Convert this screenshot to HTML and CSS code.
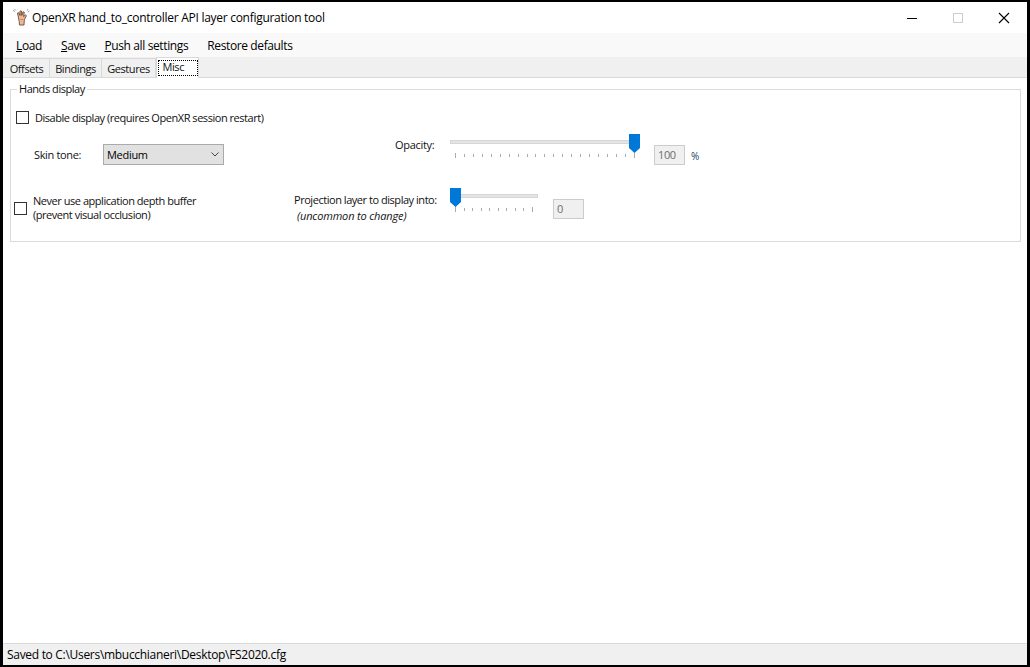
FILE: index.html
```html
<!DOCTYPE html>
<html lang="en">
<head>
<meta charset="utf-8">
<title>OpenXR hand_to_controller API layer configuration tool</title>
<link rel="stylesheet" href="styles.css">
</head>
<body>
<div class="window">
  <header class="titlebar">
    <svg class="app-icon" width="18" height="18" viewBox="0 0 18 18">
      <path d="M6.5 10 L5.5 5 L6.8 4.6 L8 7.5 L8 3 L9.5 3 L9.8 7.5 L11 3.8 L12.3 4.2 L11.6 8.5 L13.6 6.8 L14.4 7.8 L12.4 11.5 L12.2 14 L12 17 L7.5 17 L7.2 13.5 Z" fill="#ecb994" stroke="#5a3a28" stroke-width="0.8"/>
      <path d="M1 2.5 L3 3.5 M2.5 1 L3.8 2.4 M16 1 L15 2.8 M17.5 3 L15.8 4" stroke="#a0a0a0" stroke-width="1" fill="none"/>
      <path d="M8.5 11.5 L11 11.5" stroke="#b07a58" stroke-width="0.8"/>
    </svg>
    <span class="title">OpenXR hand_to_controller API layer configuration tool</span>
    <div class="caption">
      <svg class="cap-btn" width="12" height="12" viewBox="0 0 12 12"><path d="M1 6.5 H11" stroke="#000" stroke-width="1"/></svg>
      <svg class="cap-btn" width="12" height="12" viewBox="0 0 12 12"><rect x="1.5" y="1.5" width="9" height="9" fill="none" stroke="#cccccc" stroke-width="1"/></svg>
      <svg class="cap-btn" width="12" height="12" viewBox="0 0 12 12"><path d="M1 1 L11 11 M11 1 L1 11" stroke="#000" stroke-width="1.1"/></svg>
    </div>
  </header>
  <nav class="menubar">
    <span class="menu-item"><u>L</u>oad</span>
    <span class="menu-item"><u>S</u>ave</span>
    <span class="menu-item"><u>P</u>ush all settings</span>
    <span class="menu-item">Restore defaults</span>
  </nav>
  <div class="tabstrip">
    <span class="tab tab-offsets">Offsets</span>
    <span class="tab tab-bindings">Bindings</span>
    <span class="tab tab-gestures">Gestures</span>
    <span class="tab tab-active"><span class="focus-rect">Misc</span></span>
  </div>
  <main class="content">
    <fieldset class="group">
      <legend class="group-title">Hands display</legend>
      <div class="row-disable">
        <span class="checkbox"></span>
        <span class="label label-disable">Disable display (requires OpenXR session restart)</span>
      </div>
      <div class="row-skin">
        <span class="label label-skin">Skin tone:</span>
        <div class="select">
          <span class="select-value">Medium</span>
          <svg width="8" height="5" viewBox="0 0 8 5"><path d="M0.5 0.5 L4 4 L7.5 0.5" fill="none" stroke="#444" stroke-width="1"/></svg>
        </div>
        <span class="label label-opacity">Opacity:</span>
        <div class="slider slider-long">
          <div class="track"></div>
          <svg class="thumb thumb-end" width="11" height="19" viewBox="0 0 11 19"><path d="M0 0 H11 V14 L5.5 19 L0 14 Z" fill="#0078d7"/></svg>
          <div class="ticks">
            <i class="tick"></i><i class="tick"></i><i class="tick"></i><i class="tick"></i><i class="tick"></i><i class="tick"></i><i class="tick"></i>
            <i class="tick"></i><i class="tick"></i><i class="tick"></i><i class="tick"></i><i class="tick"></i><i class="tick"></i><i class="tick"></i>
            <i class="tick"></i><i class="tick"></i><i class="tick"></i><i class="tick"></i><i class="tick"></i><i class="tick"></i><i class="tick"></i>
          </div>
        </div>
        <div class="edit edit-opacity">100</div>
        <span class="unit">%</span>
      </div>
      <div class="row-depth">
        <span class="checkbox checkbox-depth"></span>
        <span class="label label-depth">Never use application depth buffer<br>(prevent visual occlusion)</span>
        <div class="label label-projection">
          <span>Projection layer to display into:</span>
          <em class="hint">(uncommon to change)</em>
        </div>
        <div class="slider slider-short">
          <div class="track"></div>
          <svg class="thumb" width="11" height="19" viewBox="0 0 11 19"><path d="M0 0 H11 V14 L5.5 19 L0 14 Z" fill="#0078d7"/></svg>
          <div class="ticks">
            <i class="tick"></i><i class="tick"></i><i class="tick"></i><i class="tick"></i><i class="tick"></i>
            <i class="tick"></i><i class="tick"></i><i class="tick"></i><i class="tick"></i><i class="tick"></i>
          </div>
        </div>
        <div class="edit edit-layer">0</div>
      </div>
    </fieldset>
  </main>
  <footer class="statusbar">Saved to C:\Users\mbucchianeri\Desktop\FS2020.cfg</footer>
</div>
</body>
</html>
```
FILE: styles.css
```css
* { box-sizing: border-box; }
html, body { margin: 0; height: 100%; }
body {
  background: #000;
  font-family: "Open Sans", "Liberation Sans", sans-serif;
  color: #000;
}
.window {
  width: 1030px;
  height: 667px;
  border-style: solid;
  border-color: #000;
  border-width: 2px 3px 2px 3px;
  background: #fff;
  display: flex;
  flex-direction: column;
  overflow: hidden;
}
.titlebar {
  height: 31px;
  flex: none;
  display: flex;
  align-items: center;
  padding-left: 9px;
  background: #fff;
}
.app-icon { margin-right: 2px; margin-top: -1px; }
.title { font-size: 12px; letter-spacing: -0.28px; white-space: nowrap; }
.caption { margin-left: auto; display: flex; }
.cap-btn { margin-left: 34px; margin-right: 0; }
.caption .cap-btn:last-child { margin-right: 17px; }
.menubar {
  height: 24px;
  flex: none;
  background: #f9f9f9;
  display: flex;
  align-items: center;
  padding-left: 13px;
  gap: 19px;
  font-size: 12px;
  letter-spacing: -0.38px;
}
.menu-item { white-space: nowrap; }
.tabstrip {
  height: 21px;
  flex: none;
  background: #f0f0f0;
  display: flex;
  align-items: flex-end;
  padding-left: 1px;
  border-bottom: 1px solid #d9d9d9;
  font-size: 11px;
}
.tab {
  height: 19px;
  display: flex;
  align-items: center;
  justify-content: center;
  border: 1px solid #d9d9d9;
  border-bottom: 0;
  border-left: 0;
  letter-spacing: -0.42px;
  color: #111;
}
.tab-offsets { width: 46px; }
.tab-bindings { width: 52px; }
.tab-gestures { width: 54px; }
.tab-active {
  width: 43px;
  height: 21px;
  margin-bottom: -1px;
  background: #fff;
  border-left: 1px solid #d9d9d9;
  align-items: flex-start;
  padding-top: 2px;
}
.focus-rect {
  width: 40px;
  height: 16px;
  line-height: 12px;
  padding-left: 4px;
  border: 1px dotted #000;
}
.content {
  flex: 1;
  min-height: 0;
  padding: 4px 6px 0 7px;
  background: #fff;
}
.group {
  margin: 0;
  padding: 0;
  height: 160px;
  border: 1px solid #dcdcdc;
  min-width: 0;
}
.group-title {
  margin-left: 6px;
  padding: 0 2px;
  font-size: 11px;
  line-height: 14px;
  letter-spacing: -0.45px;
  color: #111;
}
.label { font-size: 11px; letter-spacing: -0.46px; color: #111; white-space: nowrap; }
.checkbox {
  display: block;
  width: 13px;
  height: 13px;
  border: 1px solid #333;
  background: #fff;
  flex: none;
}
.row-disable {
  display: flex;
  align-items: center;
  gap: 6px;
  margin: 14px 0 0 5px;
}
.row-skin {
  display: flex;
  align-items: flex-start;
  height: 54px;
  margin-top: 9px;
}
.label-skin { margin: 13px 0 0 23px; width: 69px; line-height: 15px; letter-spacing: -0.35px; }
.select {
  width: 121px;
  height: 21px;
  margin-top: 10px;
  border: 1px solid #aaa;
  background: #e1e1e1;
  display: flex;
  align-items: center;
  justify-content: space-between;
  padding: 0 4px 0 3px;
  font-size: 11px;
  letter-spacing: -0.3px;
}
.label-opacity { margin: 3px 0 0 171px; width: 55px; line-height: 15px; letter-spacing: -0.3px; }
.slider { position: relative; height: 30px; flex: none; }
.slider-long { width: 190px; }
.slider-short { width: 88px; }
.track {
  height: 4px;
  margin-top: 6px;
  background: #e4e4e4;
  border: 1px solid #d6d6d6;
}
.thumb { position: absolute; top: 0; left: 0; }
.thumb-end { left: auto; right: 0; }
.ticks {
  display: flex;
  justify-content: space-between;
  margin: 9px 5px 0;
  height: 5px;
}
.tick { display: block; width: 1px; height: 3px; margin-top: 1px; background: #ababab; }
.tick:first-child, .tick:last-child { height: 5px; margin-top: 0; }
.edit {
  width: 31px;
  height: 20px;
  border: 1px solid #ccc;
  background: #f0f0f0;
  color: #6d6d6d;
  font-size: 11px;
  letter-spacing: -0.4px;
  line-height: 18px;
  padding-left: 3px;
}
.edit-opacity { margin: 11px 0 0 14px; }
.unit { margin: 15px 0 0 6px; font-size: 10px; letter-spacing: -0.5px; color: #1d3f66; }
.row-depth {
  display: flex;
  align-items: flex-start;
  height: 60px;
}
.checkbox-depth { margin: 14px 0 0 3px; }
.label-depth { width: 261px; margin: 6px 0 0 6px; line-height: 14px; }
.label-projection { width: 156px; margin-top: 4px; line-height: 16px; display: flex; flex-direction: column; }
.hint { font-style: italic; margin-left: 3px; letter-spacing: -0.15px; }
.edit-layer { margin: 11px 0 0 15px; }
.statusbar {
  height: 22px;
  flex: none;
  background: #f0f0f0;
  border-top: 1px solid #d9d9d9;
  display: flex;
  align-items: center;
  padding-left: 4px;
  font-size: 12px;
  letter-spacing: -0.3px;
}
```
